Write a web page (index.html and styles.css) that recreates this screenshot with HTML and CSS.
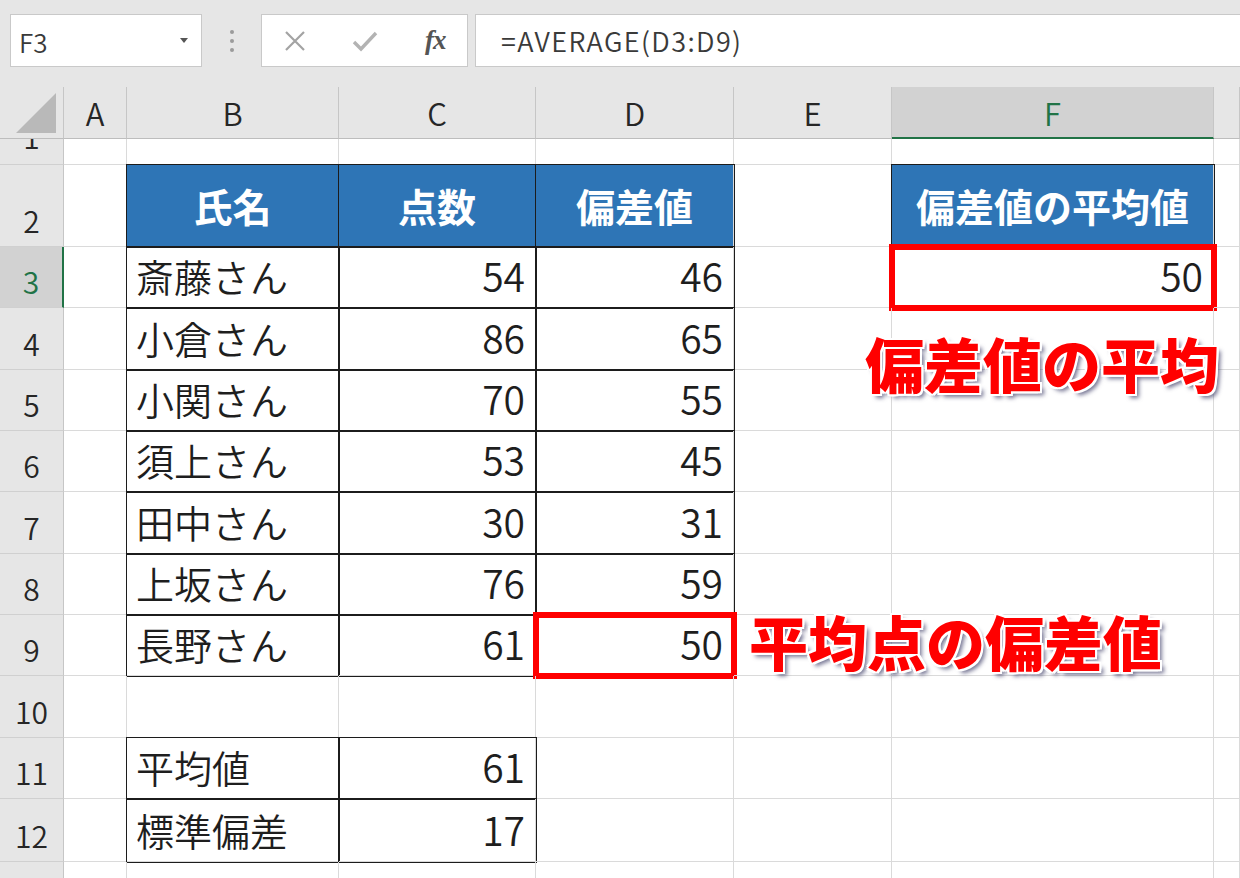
FILE: index.html
```html
<!DOCTYPE html>
<html lang="ja">
<head>
    <meta charset="UTF-8">
    <meta name="viewport" content="width=device-width, initial-scale=1.0">
    <title>偏差値の平均</title>
    <link rel="stylesheet" href="styles.css">
</head>
<body>
    <div class="app">
        <div class="formula-bar">
            <div class="name-box">
                <span>F3</span>
                <svg class="caret" width="10" height="6" viewBox="0 0 10 6"><path d="M1 0h8L5 5z" fill="#555"/></svg>
            </div>
            <div class="bar-dots">
                <svg width="6" height="24" viewBox="0 0 6 24"><circle cx="3" cy="3" r="2" fill="#9b9b9b"/><circle cx="3" cy="12" r="2" fill="#9b9b9b"/><circle cx="3" cy="21" r="2" fill="#9b9b9b"/></svg>
            </div>
            <div class="fx-buttons">
                <svg width="24" height="22" viewBox="0 0 24 22"><path d="M3 2l18 18M21 2L3 20" stroke="#a3a3a3" stroke-width="2.2" fill="none"/></svg>
                <svg width="26" height="22" viewBox="0 0 26 22"><path d="M2 12l7 7L24 3" stroke="#b3b3b3" stroke-width="3.4" fill="none"/></svg>
                <span class="fx">fx</span>
            </div>
            <div class="formula-input">=AVERAGE(D3:D9)</div>
        </div>

        <div class="sheet">
            <div class="row r-head">
                <div class="corner"><svg width="44" height="44" viewBox="0 0 44 44"><path d="M42 2v40H2z" fill="#b9b9b9"/></svg></div>
                <div class="ch">A</div>
                <div class="ch">B</div>
                <div class="ch">C</div>
                <div class="ch">D</div>
                <div class="ch">E</div>
                <div class="ch ch-sel">F</div>
                <div class="ch"></div>
            </div>

            <div class="row r1">
                <div class="rh rh-cut">1</div>
                <div class="c"></div><div class="c"></div><div class="c"></div><div class="c"></div><div class="c"></div><div class="c"></div><div class="c"></div>
            </div>

            <div class="row r2">
                <div class="rh">2</div>
                <div class="c"></div>
                <div class="c t hd">氏名</div>
                <div class="c t hd">点数</div>
                <div class="c t hd">偏差値</div>
                <div class="c"></div>
                <div class="c t hd">偏差値の平均値</div>
                <div class="c"></div>
            </div>

            <div class="row r61">
                <div class="rh rh-sel">3</div>
                <div class="c"></div>
                <div class="c t">斎藤さん</div>
                <div class="c t num">54</div>
                <div class="c t num">46</div>
                <div class="c"></div>
                <div class="c num mark">50</div>
                <div class="c"></div>
            </div>

            <div class="row r62">
                <div class="rh">4</div>
                <div class="c"></div>
                <div class="c t">小倉さん</div>
                <div class="c t num">86</div>
                <div class="c t num">65</div>
                <div class="c"></div><div class="c"></div><div class="c"></div>
            </div>

            <div class="row r61">
                <div class="rh">5</div>
                <div class="c"></div>
                <div class="c t">小関さん</div>
                <div class="c t num">70</div>
                <div class="c t num">55</div>
                <div class="c"></div><div class="c"></div><div class="c"></div>
            </div>

            <div class="row r61">
                <div class="rh">6</div>
                <div class="c"></div>
                <div class="c t">須上さん</div>
                <div class="c t num">53</div>
                <div class="c t num">45</div>
                <div class="c"></div><div class="c"></div><div class="c"></div>
            </div>

            <div class="row r62">
                <div class="rh">7</div>
                <div class="c"></div>
                <div class="c t">田中さん</div>
                <div class="c t num">30</div>
                <div class="c t num">31</div>
                <div class="c"></div><div class="c"></div><div class="c"></div>
            </div>

            <div class="row r61">
                <div class="rh">8</div>
                <div class="c"></div>
                <div class="c t">上坂さん</div>
                <div class="c t num">76</div>
                <div class="c t num">59</div>
                <div class="c"></div><div class="c"></div><div class="c"></div>
            </div>

            <div class="row r61">
                <div class="rh">9</div>
                <div class="c"></div>
                <div class="c t">長野さん</div>
                <div class="c t num">61</div>
                <div class="c num mark">50</div>
                <div class="c"></div><div class="c"></div><div class="c"></div>
            </div>

            <div class="row r62">
                <div class="rh">10</div>
                <div class="c"></div><div class="c"></div><div class="c"></div><div class="c"></div><div class="c"></div><div class="c"></div><div class="c"></div>
            </div>

            <div class="row r61">
                <div class="rh">11</div>
                <div class="c"></div>
                <div class="c t">平均値</div>
                <div class="c t num">61</div>
                <div class="c"></div><div class="c"></div><div class="c"></div><div class="c"></div>
            </div>

            <div class="row r63">
                <div class="rh">12</div>
                <div class="c"></div>
                <div class="c t">標準偏差</div>
                <div class="c t num">17</div>
                <div class="c"></div><div class="c"></div><div class="c"></div><div class="c"></div>
            </div>

            <div class="row r62">
                <div class="rh">13</div>
                <div class="c"></div><div class="c"></div><div class="c"></div><div class="c"></div><div class="c"></div><div class="c"></div><div class="c"></div>
            </div>
        </div>

        <div class="note note-avg">偏差値の平均</div>
        <div class="note note-point">平均点の偏差値</div>
    </div>
</body>
</html>
```

FILE: styles.css
```css
body {
    margin: 0;
    padding: 0;
    background-color: #ffffff;
    font-family: "Noto Sans CJK JP", "Noto Sans", sans-serif;
}

.app {
    position: relative;
    width: 1240px;
    height: 878px;
    overflow: hidden;
}

/* formula bar */

.formula-bar {
    display: flex;
    align-items: flex-start;
    height: 87px;
    padding-top: 14px;
    box-sizing: border-box;
    background-color: #e6e6e6;
}

.name-box {
    display: flex;
    align-items: center;
    justify-content: space-between;
    width: 192px;
    height: 53px;
    margin-left: 10px;
    padding: 0 12px 0 8px;
    box-sizing: border-box;
    background-color: #ffffff;
    border: 1px solid #c9c9c9;
    font-size: 26px;
    font-weight: 350;
    color: #3a3a3a;
}

.name-box span {
    line-height: 1;
    padding-top: 2px;
}

.bar-dots {
    display: flex;
    align-items: center;
    justify-content: center;
    width: 59px;
    height: 53px;
}

.fx-buttons {
    display: flex;
    align-items: center;
    width: 207px;
    height: 53px;
    padding-left: 21px;
    box-sizing: border-box;
    gap: 45px;
    background-color: #ffffff;
    border: 1px solid #c9c9c9;
}

.fx {
    font-family: "Liberation Serif", "DejaVu Serif", serif;
    font-style: italic;
    font-weight: bold;
    font-size: 27px;
    color: #555555;
    letter-spacing: -1px;
    line-height: 1;
    margin-left: 2px;
}

.formula-input {
    flex: 1;
    height: 53px;
    margin-left: 7px;
    margin-right: -10px;
    padding-left: 25px;
    box-sizing: border-box;
    display: flex;
    align-items: center;
    background-color: #ffffff;
    border: 1px solid #c9c9c9;
    font-size: 27px;
    font-weight: 350;
    letter-spacing: 1.4px;
    color: #3a3a3a;
    line-height: 1;
}

/* sheet grid */

.row {
    display: grid;
    grid-template-columns: 64px 63px 212px 197px 198px 158px 322px 1fr;
    box-sizing: border-box;
}

.r-head { height: 52px; }
.r1 { height: 26px; }
.r2 { height: 82px; }
.r61 { height: 61px; }
.r62 { height: 62px; }
.r63 { height: 63px; }

.corner {
    display: flex;
    align-items: center;
    justify-content: center;
    background-color: #e6e6e6;
    border-right: 1px solid #c6c6c6;
    border-bottom: 1px solid #bdbdbd;
    padding-left: 8px;
}

.ch {
    display: flex;
    align-items: center;
    justify-content: center;
    background-color: #e6e6e6;
    border-right: 1px solid #c6c6c6;
    border-bottom: 1px solid #bdbdbd;
    font-size: 31px;
    font-weight: 350;
    color: #262626;
    line-height: 1;
}

.ch-sel {
    background-color: #d2d2d2;
    color: #217346;
    border-bottom: 2px solid #217346;
}

.rh {
    display: flex;
    align-items: flex-end;
    justify-content: center;
    padding-bottom: 11px;
    box-sizing: border-box;
    background-color: #e6e6e6;
    border-right: 1px solid #c6c6c6;
    border-bottom: 1px solid #d0d0d0;
    font-size: 30px;
    font-weight: 350;
    color: #262626;
    line-height: 1;
    overflow: hidden;
}

.rh-cut {
    padding-bottom: 13px;
}

.rh-sel {
    background-color: #d2d2d2;
    color: #217346;
    border-right: 2px solid #217346;
}

.c {
    display: flex;
    align-items: flex-end;
    padding: 0 9px 12px 9px;
    box-sizing: border-box;
    border-right: 1px solid #dadada;
    border-bottom: 1px solid #dadada;
    font-size: 38px;
    font-weight: 350;
    color: #1e1e1e;
    line-height: 1;
    white-space: nowrap;
}

.num {
    justify-content: flex-end;
    padding-right: 10px;
    font-size: 39px;
}

.t {
    outline: 1px solid #1c1c1c;
}

.hd {
    align-items: center;
    justify-content: center;
    padding-bottom: 0;
    background-color: #2e75b6;
    color: #ffffff;
    font-weight: bold;
    font-size: 39px;
}

.mark {
    outline: 6px solid #ff0000;
    outline-offset: -3px;
}

/* annotations over the sheet */

.note {
    position: absolute;
    font-size: 59px;
    font-weight: 900;
    line-height: 1;
    color: #ff0000;
    white-space: nowrap;
    text-shadow:
        -2px -2px 0 #fff, 2px -2px 0 #fff, -2px 2px 0 #fff, 2px 2px 0 #fff,
        0 -2px 0 #fff, 0 2px 0 #fff, -2px 0 0 #fff, 2px 0 0 #fff,
        4px 4px 4px rgba(70, 70, 110, 0.75);
}

.note-avg {
    left: 865px;
    top: 333px;
}

.note-point {
    left: 749px;
    top: 611px;
}
```
